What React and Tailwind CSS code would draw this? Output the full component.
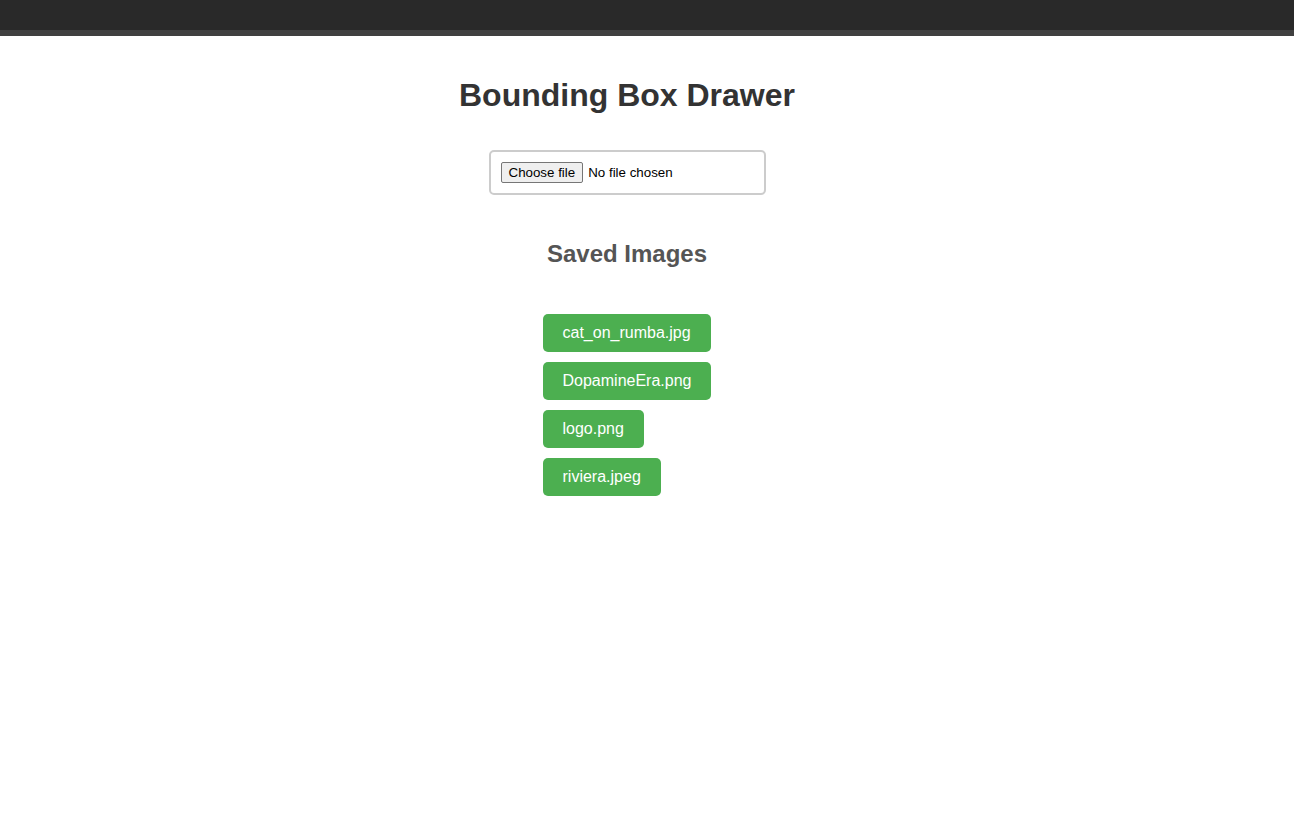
import React from 'react';

const savedImages = ['cat_on_rumba.jpg', 'DopamineEra.png', 'logo.png', 'riviera.jpeg'];

const App = () => {
  return (
    <div className="min-h-screen bg-white font-['Liberation_Sans',Arial,sans-serif]">
      <div className="h-[30px] bg-[#292929]"></div>
      <div className="h-[6px] bg-[#404040]"></div>

      <div className="pl-5 pr-[60px]">
        <h1 className="mt-[41px] text-center text-[32px] leading-[37px] font-bold text-[#333]">
          Bounding Box Drawer
        </h1>

        <div className="mt-[36px] flex justify-center">
          <div className="border-2 border-[#ccc] rounded-[5px] p-[10px] bg-white">
            <label className="flex w-[253px] h-[21px] items-center text-[13.33px] text-black cursor-pointer">
              <input type="file" className="hidden" />
              <span className="h-[21px] px-[7px] flex items-center border border-[#767676] rounded-[2px] bg-[#efefef]">
                Choose file
              </span>
              <span className="ml-[5px]">No file chosen</span>
            </label>
          </div>
        </div>

        <h2 className="mt-[45px] text-center text-[24px] leading-[28px] font-bold text-[#555]">
          Saved Images
        </h2>

        <div className="mt-[46px] flex justify-center">
          <div className="flex flex-col items-start gap-[10px]">
            {savedImages.map((name) => (
              <button
                key={name}
                className="bg-[#4CAF50] text-white text-[16px] leading-[18px] px-[20px] py-[10px] rounded-[5px]"
              >
                {name}
              </button>
            ))}
          </div>
        </div>
      </div>
    </div>
  );
};

export default App;
